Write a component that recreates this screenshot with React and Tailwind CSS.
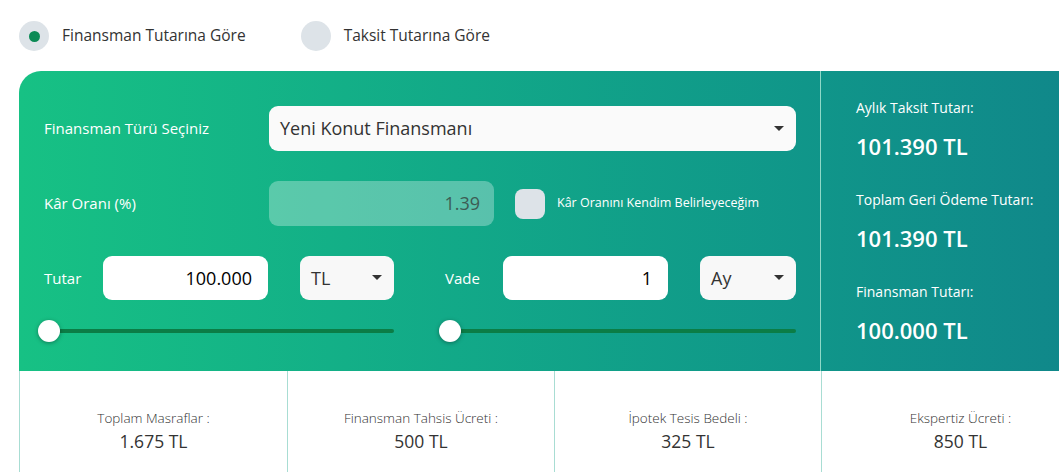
import React from "react";

const font = { fontFamily: '"Open Sans", "Noto Sans", sans-serif' };

function Caret() {
  return (
    <svg width="10" height="6" viewBox="0 0 10 6" className="shrink-0">
      <path d="M0 0 L10 0 L5 5 Z" fill="#333" />
    </svg>
  );
}

function Slider() {
  return (
    <div className="relative h-[22px] flex-1">
      <div className="absolute left-[11px] right-0 top-[9px] h-[4px] bg-[#0b7d46] rounded-full" />
      <div className="absolute left-0 top-0 w-[22px] h-[22px] rounded-full bg-white shadow-[0_1px_4px_rgba(0,0,0,0.35)]" />
    </div>
  );
}

function Half({ label, value, unit, labelW, w }) {
  return (
    <div className={`flex items-center ${w}`}>
      <div className={`${labelW} text-white text-[15px]`}>{label}</div>
      <div className="w-[165px] h-[44px] bg-white rounded-[9px] flex items-center justify-end pr-[16px] text-[18px] text-black">
        {value}
      </div>
      <div className="ml-[32px] flex-1 h-[44px] bg-[#f8f8f8] rounded-[9px] flex items-center justify-between pl-[11px] pr-[12px] text-[18px] text-[#333]">
        <span>{unit}</span>
        <Caret />
      </div>
    </div>
  );
}

function ResultBlock({ label, value }) {
  return (
    <div className="h-[92px]">
      <div className="text-white text-[14px] leading-[20px]">{label}</div>
      <div className="text-white text-[22px] font-semibold leading-[28px] mt-[14px]">{value}</div>
    </div>
  );
}

function Cell({ label, value }) {
  return (
    <div className="flex flex-col items-center pt-[38px] border-r border-[#a8ddd3]">
      <div className="text-[13.5px] font-light text-[#333] leading-[18px]">{label}</div>
      <div className="text-[17.5px] text-[#333] leading-[24px] mt-[2px]">{value}</div>
    </div>
  );
}

export default function App() {
  return (
    <div className="w-[1059px] h-[472px] overflow-hidden bg-white" style={font}>
      <div className="flex items-center pt-[21px] pl-[19px] h-[51px]">
        <div className="w-[30px] h-[30px] rounded-full bg-[#dde3e8] flex items-center justify-center">
          <div className="w-[11px] h-[11px] rounded-full bg-[#0b8a55]" />
        </div>
        <span className="ml-[13px] text-[15.5px] text-[#333]">Finansman Tutarına Göre</span>
        <div className="ml-[55px] w-[30px] h-[30px] rounded-full bg-[#dde3e8]" />
        <span className="ml-[13px] text-[15.5px] text-[#333]">Taksit Tutarına Göre</span>
      </div>

      <div className="ml-[19px] mt-[20px] w-[1080px]">
        <div className="flex h-[300px] rounded-tl-[22px] bg-gradient-to-r from-[#17c184] to-[#10868a]">
          <div className="w-[801px] pl-[25px] pr-[24px] pt-[35px]">
            <div className="flex items-center h-[45px]">
              <div className="w-[225px] text-white text-[15px]">Finansman Türü Seçiniz</div>
              <div className="flex-1 h-[45px] bg-[#fafafa] rounded-[9px] flex items-center justify-between pl-[11px] pr-[12px] text-[18px] text-[#333]">
                <span>Yeni Konut Finansmanı</span>
                <Caret />
              </div>
            </div>
            <div className="flex items-center h-[45px] mt-[30px]">
              <div className="w-[225px] text-white text-[15px]">Kâr Oranı (%)</div>
              <div className="w-[225px] h-[45px] rounded-[9px] bg-white/30 flex items-center justify-end pr-[14px] text-[18px] text-[#3d5c54]">
                1.39
              </div>
              <div className="ml-[21px] w-[30px] h-[30px] rounded-[8px] bg-[#dde3e8]" />
              <span className="ml-[12px] text-white text-[12.5px]">Kâr Oranını Kendim Belirleyeceğim</span>
            </div>
            <div className="flex items-center mt-[30px] gap-[51px]">
              <Half label="Tutar" value="100.000" unit="TL" labelW="w-[59px]" w="w-[350px]" />
              <Half label="Vade" value="1" unit="Ay" labelW="w-[58px]" w="w-[351px]" />
            </div>
            <div className="flex items-center mt-[20px] -ml-[6px] gap-[45px]">
              <div className="w-[356px] flex"><Slider /></div>
              <div className="w-[357px] flex"><Slider /></div>
            </div>
          </div>
          <div className="w-px bg-[#8fd9c8]" />
          <div className="flex-1 pl-[35px] pt-[27px]">
            <ResultBlock label="Aylık Taksit Tutarı:" value="101.390 TL" />
            <ResultBlock label="Toplam Geri Ödeme Tutarı:" value="101.390 TL" />
            <ResultBlock label="Finansman Tutarı:" value="100.000 TL" />
          </div>
        </div>
        <div className="grid grid-cols-[268px_267px_267px_278px] h-[101px] border-l border-[#a8ddd3]">
          <Cell label="Toplam Masraflar :" value="1.675 TL" />
          <Cell label="Finansman Tahsis Ücreti :" value="500 TL" />
          <Cell label="İpotek Tesis Bedeli :" value="325 TL" />
          <Cell label="Ekspertiz Ücreti :" value="850 TL" />
        </div>
      </div>
    </div>
  );
}
